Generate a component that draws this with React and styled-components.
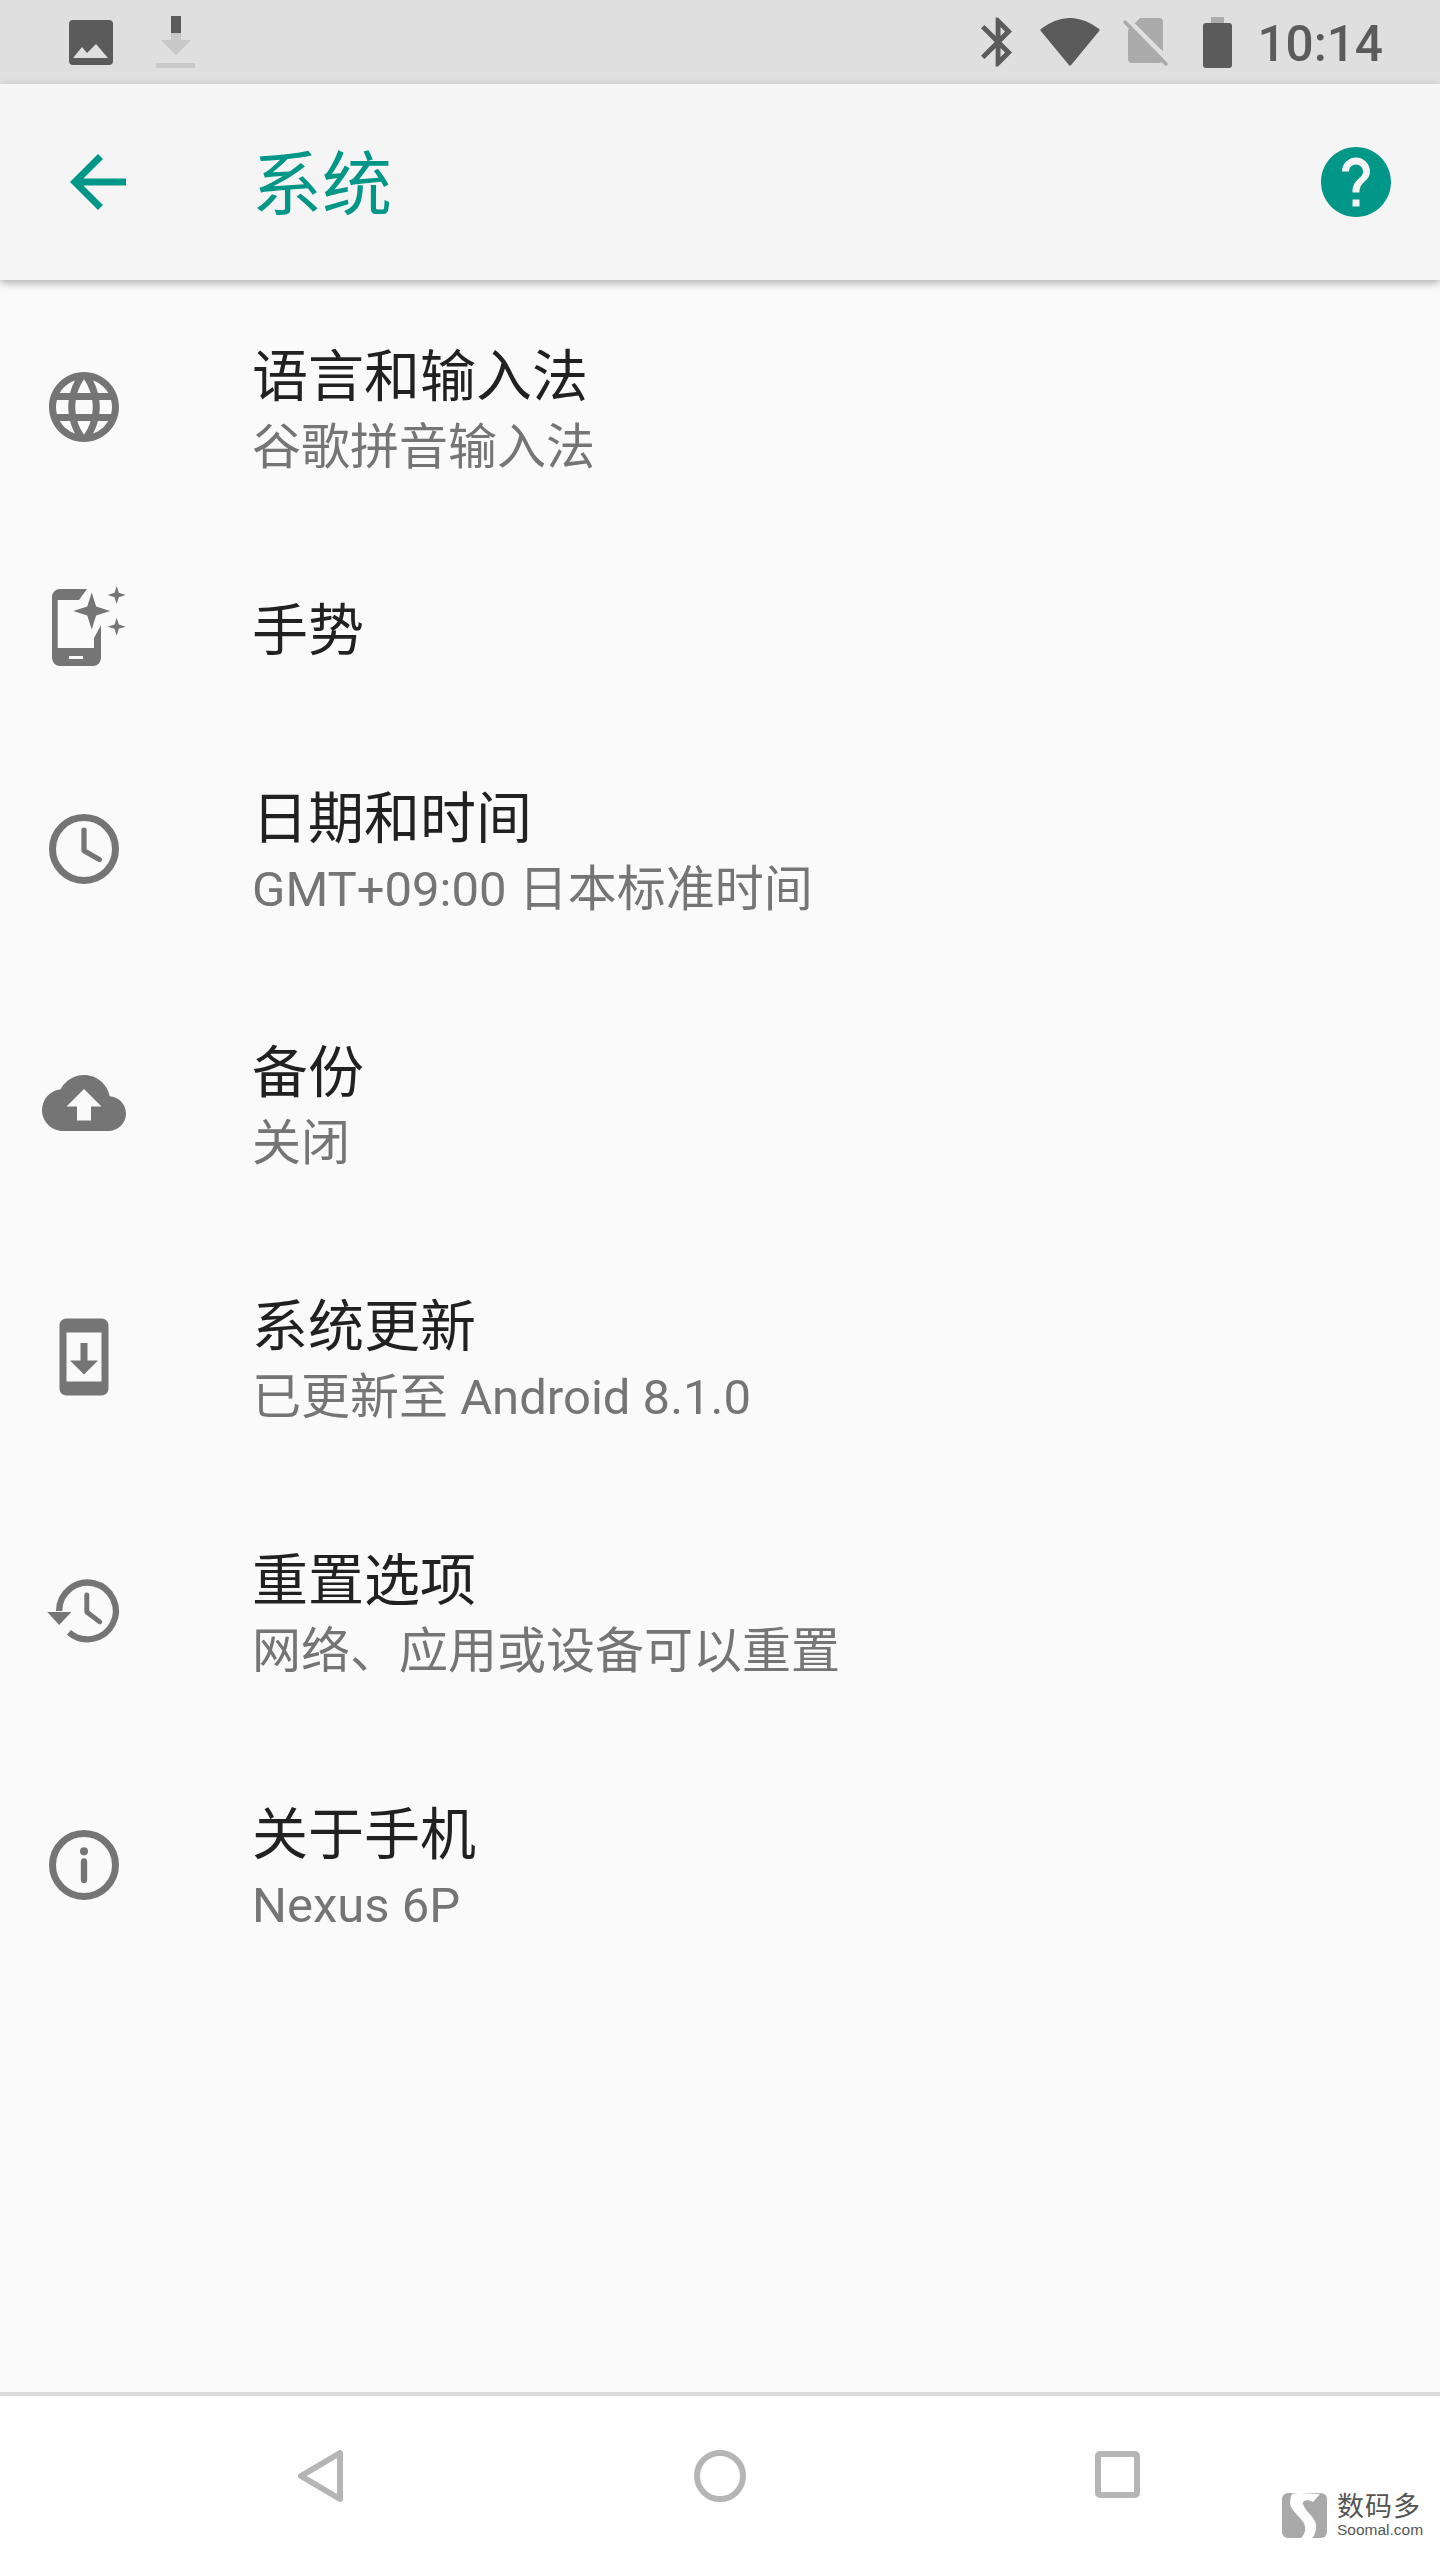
import styled, { createGlobalStyle } from "styled-components";

const GlobalStyle = createGlobalStyle`
  html, body {
    margin: 0;
    padding: 0;
    background: #fafafa;
  }
  * {
    box-sizing: border-box;
  }
`;

const Screen = styled.div`
  position: relative;
  display: flex;
  flex-direction: column;
  width: 1440px;
  height: 2560px;
  overflow: hidden;
  background: #fafafa;
  font-family: Roboto, "Noto Sans CJK SC", sans-serif;
`;

const StatusBar = styled.div`
  display: flex;
  align-items: center;
  height: 84px;
  padding: 0 57px 0 69px;
  background: #dfdfdf;
`;

const StatusIcon = styled.svg`
  display: block;
  flex: none;
  margin-left: ${(props) => props.$gap || 0}px;
`;

const StatusSpacer = styled.div`
  flex: 1;
`;

const Clock = styled.span`
  margin-left: 25px;
  padding-top: 5px;
  font-size: 49.5px;
  font-weight: 500;
  line-height: 79px;
  color: #5b5b5b;
`;

const AppBar = styled.header`
  position: relative;
  z-index: 1;
  display: flex;
  align-items: center;
  height: 196px;
  padding: 0 42px 0 56px;
  background: #f5f5f5;
  box-shadow: 0 3px 8px rgba(0, 0, 0, 0.3);
`;

const AppBarTitle = styled.h1`
  margin: 0 0 5px 112px;
  font-size: 70px;
  font-weight: 400;
  color: #009688;
`;

const HelpIcon = styled.svg`
  display: block;
  margin-left: auto;
`;

const List = styled.main`
  flex: 1;
`;

const Row = styled.div`
  display: flex;
  align-items: center;
  height: ${(props) => (props.$single ? 188 : 254)}px;
`;

const IconCell = styled.div`
  display: flex;
  flex: none;
  justify-content: center;
  width: 168px;
  margin-right: 84px;
`;

const RowIcon = styled.svg`
  display: block;
  fill: #757575;
`;

const RowText = styled.div`
  display: flex;
  flex-direction: column;
  padding-top: ${(props) => (props.$single ? 6 : 12)}px;
`;

const RowTitle = styled.div`
  font-size: 56px;
  line-height: 70px;
  color: #212121;
`;

const RowSub = styled.div`
  font-size: 49px;
  line-height: 72px;
  color: #757575;
`;

const NavBar = styled.nav`
  display: flex;
  justify-content: center;
  align-items: center;
  height: 168px;
  padding-bottom: 4px;
  background: #fff;
  border-top: 4px solid #dbdbdb;
`;

const NavButton = styled.div`
  display: flex;
  justify-content: center;
  width: 400px;
`;

const NavIcon = styled.svg`
  display: block;
  fill: none;
  stroke: #b5b5b5;
  stroke-width: 6;
  stroke-linejoin: round;
`;

const Watermark = styled.div`
  position: absolute;
  left: 1282px;
  top: 2493px;
  display: flex;
  gap: 10px;
`;

const WatermarkText = styled.div`
  display: flex;
  flex-direction: column;
  color: #555;
`;

const WatermarkName = styled.span`
  font-size: 27px;
  line-height: 29px;
  letter-spacing: 1px;
`;

const WatermarkUrl = styled.span`
  font-family: "Liberation Sans", sans-serif;
  font-size: 15.5px;
  line-height: 15px;
`;

function star(cx, cy, r) {
  const k = r * 0.24;
  return (
    `M${cx} ${cy - r}L${cx + k} ${cy - k}L${cx + r} ${cy}L${cx + k} ${cy + k}` +
    `L${cx} ${cy + r}L${cx - k} ${cy + k}L${cx - r} ${cy}L${cx - k} ${cy - k}Z`
  );
}

function GlobeIcon() {
  return (
    <RowIcon width="84" height="84" viewBox="0 0 24 24">
      <path d="M11.99 2C6.47 2 2 6.48 2 12s4.47 10 9.99 10C17.52 22 22 17.52 22 12S17.52 2 11.99 2zm6.93 6h-2.95c-.32-1.25-.78-2.45-1.38-3.56 1.84.63 3.37 1.91 4.33 3.56zM12 4.04c.83 1.2 1.48 2.53 1.91 3.96h-3.82c.43-1.43 1.08-2.76 1.91-3.96zM4.26 14C4.1 13.36 4 12.69 4 12s.1-1.36.26-2h3.38c-.08.66-.14 1.32-.14 2 0 .68.06 1.34.14 2H4.26zm.82 2h2.95c.32 1.25.78 2.45 1.38 3.56-1.84-.63-3.37-1.9-4.33-3.56zm2.95-8H5.08c.96-1.66 2.49-2.93 4.33-3.56C8.81 5.55 8.35 6.75 8.03 8zM12 19.96c-.83-1.2-1.48-2.53-1.91-3.96h3.82c-.43 1.43-1.08 2.76-1.91 3.96zM14.34 14H9.66c-.09-.66-.16-1.32-.16-2 0-.68.07-1.35.16-2h4.68c.09.65.16 1.32.16 2 0 .68-.07 1.34-.16 2zm.25 5.56c.6-1.11 1.06-2.31 1.38-3.56h2.95c-.96 1.65-2.49 2.93-4.33 3.56zM16.36 14c.08-.66.14-1.32.14-2 0-.68-.06-1.34-.14-2h3.38c.16.64.26 1.31.26 2s-.1 1.36-.26 2h-3.38z" />
    </RowIcon>
  );
}

function GestureIcon() {
  return (
    <RowIcon width="84" height="84" viewBox="0 0 84 84">
      <path
        fillRule="evenodd"
        d="M18 3H45L37 14H15.7V62H52V52L59 39V72a8 8 0 0 1-8 8H18a8 8 0 0 1-8-8V11a8 8 0 0 1 8-8ZM27 70V73H41V70Z"
      />
      <path d={star(49.7, 25, 18.5)} />
      <path d={star(74.7, 9, 9)} />
      <path d={star(74.7, 40.7, 9)} />
    </RowIcon>
  );
}

function ClockIcon() {
  return (
    <RowIcon width="84" height="84" viewBox="0 0 24 24">
      <circle cx="12" cy="12" r="9" fill="none" stroke="#757575" strokeWidth="2" />
      <path
        d="M12 6.6V12.5L16.4 15"
        fill="none"
        stroke="#757575"
        strokeWidth="1.5"
        strokeLinecap="round"
        strokeLinejoin="round"
      />
    </RowIcon>
  );
}

function CloudIcon() {
  return (
    <RowIcon width="84" height="84" viewBox="0 0 24 24">
      <path d="M19.35 10.04C18.67 6.59 15.64 4 12 4 9.11 4 6.6 5.64 5.35 8.04 2.34 8.36 0 10.91 0 14c0 3.31 2.69 6 6 6h13c2.76 0 5-2.24 5-5 0-2.64-2.05-4.78-4.65-4.96zM14 13v4h-4v-4H7l5-5 5 5h-3z" />
    </RowIcon>
  );
}

function UpdateIcon() {
  return (
    <RowIcon width="84" height="84" viewBox="0 0 24 24">
      <path d="M17 1.01L7 1c-1.1 0-2 .9-2 2v18c0 1.1.9 2 2 2h10c1.1 0 2-.9 2-2V3c0-1.1-.9-1.99-2-1.99zM17 19H7V5h10v14zm-1-6h-3V8h-2v5H8l4 4 4-4z" />
    </RowIcon>
  );
}

function HistoryIcon() {
  return (
    <RowIcon width="84" height="84" viewBox="0 0 24 24">
      <path
        d="M4.9 12A8.1 8.1 0 1 1 7.7 18.1"
        fill="none"
        stroke="#757575"
        strokeWidth="1.8"
      />
      <path d="M1.5 12.3H8.4L4.9 16Z" />
      <path
        d="M12.8 7.4V12.3L16.5 15.1"
        fill="none"
        stroke="#757575"
        strokeWidth="1.4"
        strokeLinecap="round"
        strokeLinejoin="round"
      />
    </RowIcon>
  );
}

function InfoIcon() {
  return (
    <RowIcon width="84" height="84" viewBox="0 0 24 24">
      <circle cx="12" cy="12" r="9" fill="none" stroke="#757575" strokeWidth="2" />
      <circle cx="12" cy="8.1" r="1.15" />
      <path
        d="M12 11V16.3"
        fill="none"
        stroke="#757575"
        strokeWidth="1.8"
        strokeLinecap="round"
      />
    </RowIcon>
  );
}

const rows = [
  { id: "lang", icon: <GlobeIcon />, title: "语言和输入法", sub: "谷歌拼音输入法" },
  { id: "gesture", icon: <GestureIcon />, title: "手势" },
  { id: "date", icon: <ClockIcon />, title: "日期和时间", sub: "GMT+09:00 日本标准时间" },
  { id: "backup", icon: <CloudIcon />, title: "备份", sub: "关闭" },
  { id: "update", icon: <UpdateIcon />, title: "系统更新", sub: "已更新至 Android 8.1.0" },
  { id: "reset", icon: <HistoryIcon />, title: "重置选项", sub: "网络、应用或设备可以重置" },
  { id: "about", icon: <InfoIcon />, title: "关于手机", sub: "Nexus 6P" },
];

function App() {
  return (
    <Screen>
      <GlobalStyle />
      <StatusBar>
        <StatusIcon width="44" height="45" viewBox="0 0 44 45">
          <rect width="44" height="45" rx="4" fill="#5b5b5b" />
          <path d="M4 38L13 27L18 33L27 24L39 38Z" fill="#dfdfdf" />
        </StatusIcon>
        <StatusIcon $gap={43} width="39" height="52" viewBox="0 0 39 52">
          <path d="M15 17H25V24H35L20 39L5 24H15ZM0 47H39V52H0Z" fill="#c8c8c8" />
          <rect x="15" width="10" height="17" fill="#5b5b5b" />
        </StatusIcon>
        <StatusSpacer />
        <StatusIcon width="31" height="50" viewBox="5 2 12.71 20" fill="#5b5b5b">
          <path d="M17.71 7.71L12 2h-1v7.59L6.41 5 5 6.41 10.59 12 5 17.59 6.41 19 11 14.41V22h1l5.71-5.71-4.3-4.29 4.3-4.29zM13 5.83l1.88 1.88L13 9.59V5.83zm1.88 10.46L13 18.17v-3.76l1.88 1.88z" />
        </StatusIcon>
        <StatusIcon $gap={28} width="60" height="48" viewBox="0 0 60 48">
          <path
            d="M30 46L2 12Q30 -9 58 12Z"
            fill="#5b5b5b"
            stroke="#5b5b5b"
            strokeWidth="3"
            strokeLinejoin="round"
          />
        </StatusIcon>
        <StatusIcon $gap={23} width="45" height="48" viewBox="0 0 45 48">
          <path
            d="M17 0H36a4 4 0 0 1 4 4V41a4 4 0 0 1-4 4H9a4 4 0 0 1-4-4V12Z"
            fill="#ababab"
          />
          <path d="M5 2L45 42" stroke="#dfdfdf" strokeWidth="5" />
          <path d="M2 4L43 46" stroke="#ababab" strokeWidth="3.5" strokeLinecap="round" />
        </StatusIcon>
        <StatusIcon $gap={35} width="29" height="51" viewBox="0 0 29 51">
          <rect x="8" width="13" height="8" fill="#ababab" />
          <rect y="6" width="29" height="45" rx="3" fill="#5b5b5b" />
        </StatusIcon>
        <Clock>10:14</Clock>
      </StatusBar>

      <AppBar>
        <svg width="84" height="84" viewBox="0 0 24 24" fill="#009688">
          <path d="M20 11H7.83l5.59-5.59L12 4l-8 8 8 8 1.41-1.41L7.83 13H20v-2z" />
        </svg>
        <AppBarTitle>系统</AppBarTitle>
        <HelpIcon width="84" height="84" viewBox="0 0 24 24" fill="#009688">
          <path d="M12 2C6.48 2 2 6.48 2 12s4.48 10 10 10 10-4.48 10-10S17.52 2 12 2zm1 17h-2v-2h2v2zm2.07-7.75l-.9.92C13.45 12.9 13 13.5 13 15h-2v-.5c0-1.1.45-2.1 1.17-2.83l1.24-1.26c.37-.36.59-.86.59-1.41 0-1.1-.9-2-2-2s-2 .9-2 2H8c0-2.21 1.79-4 4-4s4 1.79 4 4c0 .88-.36 1.68-.93 2.25z" />
        </HelpIcon>
      </AppBar>

      <List>
        {rows.map((row) => (
          <Row key={row.id} $single={!row.sub}>
            <IconCell>{row.icon}</IconCell>
            <RowText $single={!row.sub}>
              <RowTitle>{row.title}</RowTitle>
              {row.sub && <RowSub>{row.sub}</RowSub>}
            </RowText>
          </Row>
        ))}
      </List>

      <NavBar>
        <NavButton>
          <NavIcon width="60" height="60" viewBox="0 0 60 60">
            <path d="M50 7V53L11 30Z" />
          </NavIcon>
        </NavButton>
        <NavButton>
          <NavIcon width="60" height="60" viewBox="0 0 60 60">
            <circle cx="30" cy="30" r="23" />
          </NavIcon>
        </NavButton>
        <NavButton>
          <NavIcon width="60" height="60" viewBox="0 0 60 60">
            <rect x="8" y="8" width="39" height="41" rx="2" />
          </NavIcon>
        </NavButton>
      </NavBar>

      <Watermark>
        <svg width="45" height="45" viewBox="0 0 45 45">
          <rect width="45" height="45" rx="6" fill="#a9a9a9" />
          <path
            d="M10 1C17 -1 28 1 38 1L31 9C26 6 20 7 21 11C24 20 35 25 34 34C34 40 32 43 30 45L19 45C22 42 24 38 23 33C21 25 8 18 8 10C8 6 9 3 10 1Z"
            fill="#fff"
          />
        </svg>
        <WatermarkText>
          <WatermarkName>数码多</WatermarkName>
          <WatermarkUrl>Soomal.com</WatermarkUrl>
        </WatermarkText>
      </Watermark>
    </Screen>
  );
}

export default App;
